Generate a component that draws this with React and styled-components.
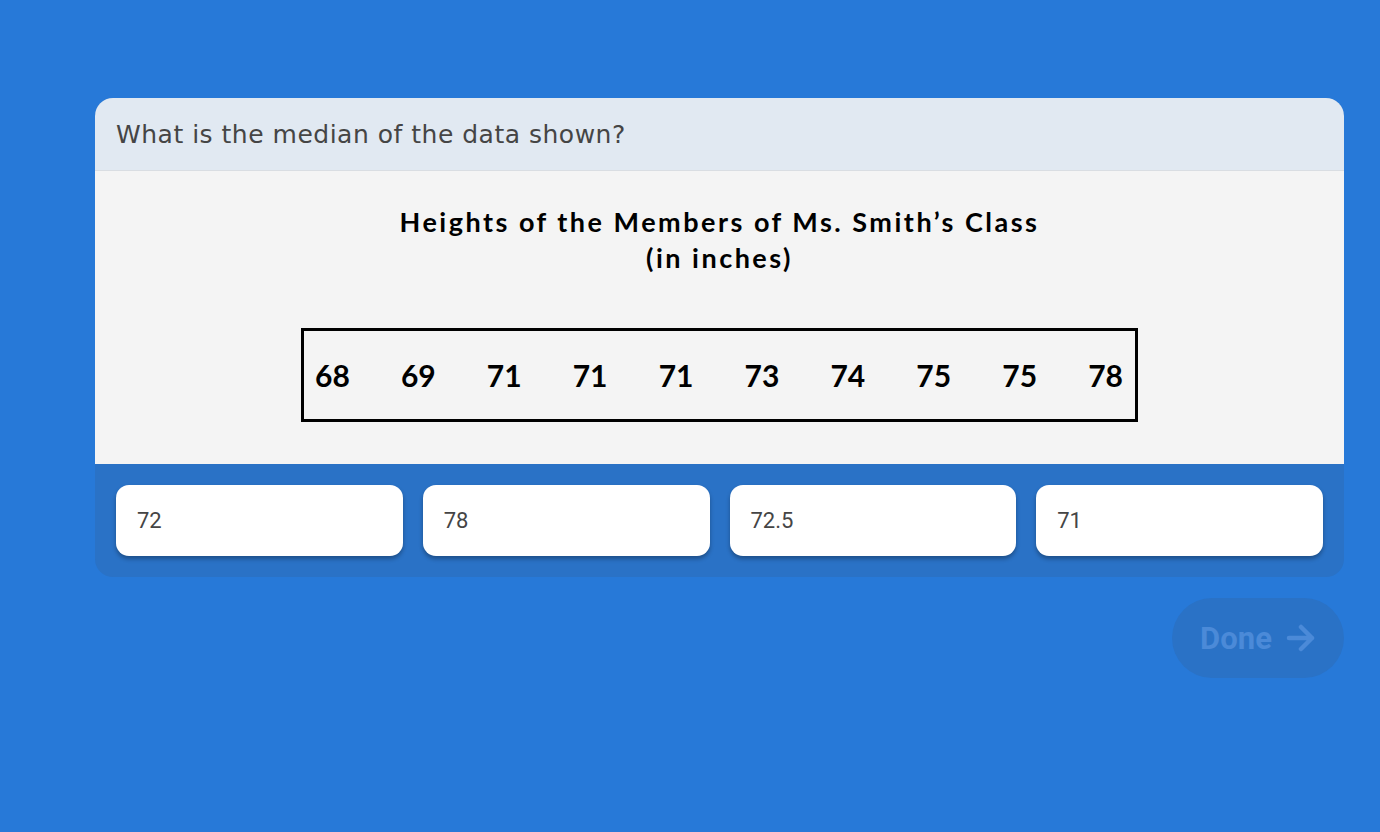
import styled, { createGlobalStyle } from "styled-components";

const GlobalStyle = createGlobalStyle`
    html, body {
        margin: 0;
        padding: 0;
        background: #2779d8;
    }
`;

const Page = styled.div`
    min-height: 832px;
    background: #2779d8;
    padding: 98px 36px 0 95px;
    box-sizing: border-box;
    display: flex;
    flex-direction: column;
    align-items: stretch;
`;

const Card = styled.div`
    border-radius: 18px;
    overflow: hidden;
    background: #2a72c6;
`;

const Header = styled.div`
    height: 73px;
    background: #e1e9f2;
    border-bottom: 1px solid #d9dde2;
    display: flex;
    align-items: center;
    padding: 0 21px;
    font-family: "DejaVu Sans", "Open Sans", sans-serif;
    font-size: 25px;
    letter-spacing: 0.5px;
    color: #454545;
    box-sizing: border-box;
`;

const Body = styled.div`
    background: #f4f4f4;
    height: 293px;
    display: flex;
    flex-direction: column;
    align-items: center;
    padding-top: 33px;
    box-sizing: border-box;
`;

const Title = styled.div`
    font-family: "Lato", "DejaVu Sans", sans-serif;
    font-weight: 700;
    font-size: 27px;
    line-height: 36px;
    letter-spacing: 2.5px;
    text-align: center;
    color: #000;
`;

const DataBox = styled.div`
    margin-top: 52px;
    width: 837px;
    height: 94px;
    border: 3px solid #000;
    box-sizing: border-box;
    display: flex;
    justify-content: space-between;
    align-items: center;
    padding: 0 12px 0 11px;
    font-family: "Lato", "DejaVu Sans", sans-serif;
    font-weight: 700;
    font-size: 30px;
    color: #000;
`;

const Answers = styled.div`
    display: grid;
    grid-template-columns: repeat(4, 1fr);
    gap: 20px;
    padding: 21px;
`;

const Option = styled.button`
    height: 71px;
    background: #fff;
    border: none;
    border-radius: 13px;
    box-shadow: 0 3px 4px rgba(0, 0, 0, 0.3);
    text-align: left;
    padding: 0 21px;
    font-family: "Roboto", sans-serif;
    font-size: 22px;
    color: #454545;
    cursor: pointer;
`;

const Footer = styled.div`
    display: flex;
    justify-content: flex-end;
    padding-top: 21px;
`;

const DoneButton = styled.button`
    width: 172px;
    height: 80px;
    border-radius: 40px;
    border: none;
    background: #2a72c6;
    color: #4b8ad8;
    font-family: "Roboto", sans-serif;
    font-weight: 700;
    font-size: 31px;
    display: flex;
    align-items: center;
    justify-content: center;
    gap: 14px;
    padding: 0;
`;

const values = [68, 69, 71, 71, 71, 73, 74, 75, 75, 78];
const options = ["72", "78", "72.5", "71"];

const App = () => {
    return (
        <Page>
            <GlobalStyle />
            <Card>
                <Header>What is the median of the data shown?</Header>
                <Body>
                    <Title>
                        Heights of the Members of Ms. Smith’s Class
                        <br />
                        (in inches)
                    </Title>
                    <DataBox>
                        {values.map((v, i) => (
                            <span key={i}>{v}</span>
                        ))}
                    </DataBox>
                </Body>
                <Answers>
                    {options.map((o) => (
                        <Option key={o}>{o}</Option>
                    ))}
                </Answers>
            </Card>
            <Footer>
                <DoneButton>
                    Done
                    <svg width="30" height="28" viewBox="0 0 30 28" fill="none" stroke="currentColor" strokeWidth="4.5" strokeLinecap="round" strokeLinejoin="round">
                        <path d="M3 14h23M15 3l11 11-11 11" />
                    </svg>
                </DoneButton>
            </Footer>
        </Page>
    );
};

export default App;
